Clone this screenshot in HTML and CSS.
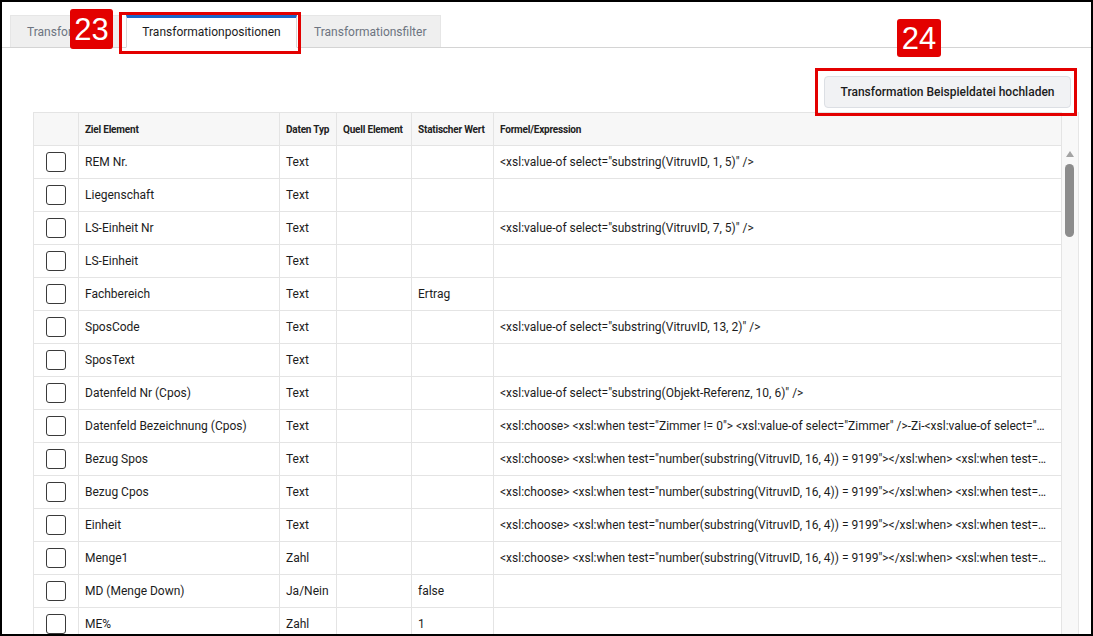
FILE: index.html
```html
<!DOCTYPE html>
<html lang="de">
<head>
  <meta charset="UTF-8">
  <title>Transformationpositionen</title>
  <link rel="stylesheet" href="styles.css">
</head>
<body>
  <div class="frame">
    <div class="tabs">
      <div class="tab tab-first">Transfor</div>
      <div class="tab active">Transformationpositionen</div>
      <div class="tab">Transformationsfilter</div>
    </div>

    <div class="toolbar">
      <button class="upload-btn">Transformation Beispieldatei hochladen</button>
    </div>

    <div class="grid-wrap">
      <table class="grid">
        <colgroup>
          <col class="c-check">
          <col class="c-ziel">
          <col class="c-typ">
          <col class="c-quell">
          <col class="c-wert">
          <col class="c-formel">
        </colgroup>
        <thead>
          <tr>
            <th></th>
            <th>Ziel Element</th>
            <th>Daten Typ</th>
            <th>Quell Element</th>
            <th>Statischer Wert</th>
            <th>Formel/Expression</th>
          </tr>
        </thead>
        <tbody>
          <tr><td><span class="box"></span></td><td>REM Nr.</td><td>Text</td><td></td><td></td><td>&lt;xsl:value-of select="substring(VitruvID, 1, 5)" /&gt;</td></tr>
          <tr><td><span class="box"></span></td><td>Liegenschaft</td><td>Text</td><td></td><td></td><td></td></tr>
          <tr><td><span class="box"></span></td><td>LS-Einheit Nr</td><td>Text</td><td></td><td></td><td>&lt;xsl:value-of select="substring(VitruvID, 7, 5)" /&gt;</td></tr>
          <tr><td><span class="box"></span></td><td>LS-Einheit</td><td>Text</td><td></td><td></td><td></td></tr>
          <tr><td><span class="box"></span></td><td>Fachbereich</td><td>Text</td><td></td><td>Ertrag</td><td></td></tr>
          <tr><td><span class="box"></span></td><td>SposCode</td><td>Text</td><td></td><td></td><td>&lt;xsl:value-of select="substring(VitruvID, 13, 2)" /&gt;</td></tr>
          <tr><td><span class="box"></span></td><td>SposText</td><td>Text</td><td></td><td></td><td></td></tr>
          <tr><td><span class="box"></span></td><td>Datenfeld Nr (Cpos)</td><td>Text</td><td></td><td></td><td>&lt;xsl:value-of select="substring(Objekt-Referenz, 10, 6)" /&gt;</td></tr>
          <tr><td><span class="box"></span></td><td>Datenfeld Bezeichnung (Cpos)</td><td>Text</td><td></td><td></td><td>&lt;xsl:choose&gt; &lt;xsl:when test="Zimmer != 0"&gt; &lt;xsl:value-of select="Zimmer" /&gt;-Zi-&lt;xsl:value-of select="…</td></tr>
          <tr><td><span class="box"></span></td><td>Bezug Spos</td><td>Text</td><td></td><td></td><td>&lt;xsl:choose&gt; &lt;xsl:when test="number(substring(VitruvID, 16, 4)) = 9199"&gt;&lt;/xsl:when&gt; &lt;xsl:when test=…</td></tr>
          <tr><td><span class="box"></span></td><td>Bezug Cpos</td><td>Text</td><td></td><td></td><td>&lt;xsl:choose&gt; &lt;xsl:when test="number(substring(VitruvID, 16, 4)) = 9199"&gt;&lt;/xsl:when&gt; &lt;xsl:when test=…</td></tr>
          <tr><td><span class="box"></span></td><td>Einheit</td><td>Text</td><td></td><td></td><td>&lt;xsl:choose&gt; &lt;xsl:when test="number(substring(VitruvID, 16, 4)) = 9199"&gt;&lt;/xsl:when&gt; &lt;xsl:when test=…</td></tr>
          <tr><td><span class="box"></span></td><td>Menge1</td><td>Zahl</td><td></td><td></td><td>&lt;xsl:choose&gt; &lt;xsl:when test="number(substring(VitruvID, 16, 4)) = 9199"&gt;&lt;/xsl:when&gt; &lt;xsl:when test=…</td></tr>
          <tr><td><span class="box"></span></td><td>MD (Menge Down)</td><td>Ja/Nein</td><td></td><td>false</td><td></td></tr>
          <tr><td><span class="box"></span></td><td>ME%</td><td>Zahl</td><td></td><td>1</td><td></td></tr>
        </tbody>
      </table>
      <div class="scrollbar">
        <div class="scroll-up"></div>
        <div class="scroll-thumb"></div>
      </div>
    </div>

    <!-- annotation markers -->
    <div class="mark mark-23">23</div>
    <div class="outline outline-23"></div>
    <div class="mark mark-24">24</div>
    <div class="outline outline-24"></div>
  </div>
</body>
</html>
```

FILE: styles.css
```css
html, body {
  margin: 0;
  padding: 0;
}
body {
  font-family: Roboto, "Liberation Sans", sans-serif;
  color: #1c1c1c;
  background: #fff;
}
.frame {
  position: relative;
  width: 1093px;
  height: 636px;
  box-sizing: border-box;
  border: 2px solid #000;
  overflow: hidden;
  background: #fff;
}
.tabs {
  display: flex;
  gap: 2px;
  margin-top: 13px;
  padding-left: 8px;
  height: 32px;
  border-bottom: 1px solid #d4d4d4;
}
.tab {
  box-sizing: border-box;
  height: 32px;
  padding: 0 14px;
  line-height: 32px;
  font-size: 12px;
  color: #6d7480;
  background: #efefef;
  border: 1px solid #e6e6e6;
  border-bottom: none;
  white-space: nowrap;
  overflow: hidden;
}
.tab-first {
  width: 112px;
  padding-left: 16px;
}
.tab.active {
  width: 171px;
  margin-left: 2px;
  text-align: center;
  color: #1c1c1c;
  background: #fff;
  border: 1px solid #d8d8d8;
  border-top: 3px solid #1a66c8;
  border-bottom: 1px solid #fff;
  height: 33px;
  line-height: 28px;
}
.tab:last-child {
  width: 142px;
  text-align: center;
}
.toolbar {
  display: flex;
  justify-content: flex-end;
  padding: 28px 20px 0 0;
}
.upload-btn {
  height: 32px;
  width: 247px;
  font-family: Roboto, "Liberation Sans", sans-serif;
  font-size: 12px;
  font-weight: 500;
  color: #1c1c1c;
  background: #f1f2f4;
  border: 1px solid #dcdfe4;
  border-radius: 4px;
  padding: 0;
}
.grid-wrap {
  display: flex;
  margin: 4px 0 0 31px;
}
.grid {
  width: 1028px;
  table-layout: fixed;
  border-collapse: collapse;
  font-size: 12px;
}
.c-check { width: 45px; }
.c-ziel { width: 201px; }
.c-typ { width: 57px; }
.c-quell { width: 75px; }
.c-wert { width: 82px; }
.c-formel { width: 568px; }
.grid th,
.grid td {
  height: 32px;
  padding: 0 6px;
  border: 1px solid #e4e4e4;
  text-align: left;
  white-space: nowrap;
  overflow: hidden;
}
.grid th {
  padding-right: 0;
  background: #f7f7f7;
  font-size: 10px;
  font-weight: 700;
  letter-spacing: -0.2px;
  color: #222;
}
.grid td:first-child {
  text-align: center;
  padding: 0;
}
.box {
  display: inline-block;
  width: 18px;
  height: 18px;
  border: 1px solid #3a3a3a;
  border-radius: 3px;
  vertical-align: middle;
}
.scrollbar {
  position: relative;
  width: 16px;
  background: #f8f8f8;
  border-right: 1px solid #e6e6e6;
}
.scroll-up {
  position: absolute;
  left: 4px;
  top: 39px;
  width: 0;
  height: 0;
  border-left: 4px solid transparent;
  border-right: 4px solid transparent;
  border-bottom: 6px solid #a3a3a3;
}
.scroll-thumb {
  position: absolute;
  left: 3px;
  top: 52px;
  width: 9px;
  height: 73px;
  border-radius: 5px;
  background: #8c8c8c;
}

/* annotation overlays */
.mark {
  position: absolute;
  background: #e30000;
  color: #fff;
  font-family: "Liberation Sans", Arial, sans-serif;
  font-size: 31px;
  text-align: center;
  border-radius: 3px;
}
.mark-23 {
  left: 68px;
  top: 7px;
  width: 43px;
  height: 40px;
  line-height: 42px;
}
.mark-24 {
  left: 895px;
  top: 17px;
  width: 44px;
  height: 38px;
  line-height: 40px;
}
.outline {
  position: absolute;
  border: 3px solid #e30000;
  box-sizing: border-box;
}
.outline-23 {
  left: 117px;
  top: 10px;
  width: 182px;
  height: 42px;
}
.outline-24 {
  left: 813px;
  top: 66px;
  width: 262px;
  height: 48px;
}
```
